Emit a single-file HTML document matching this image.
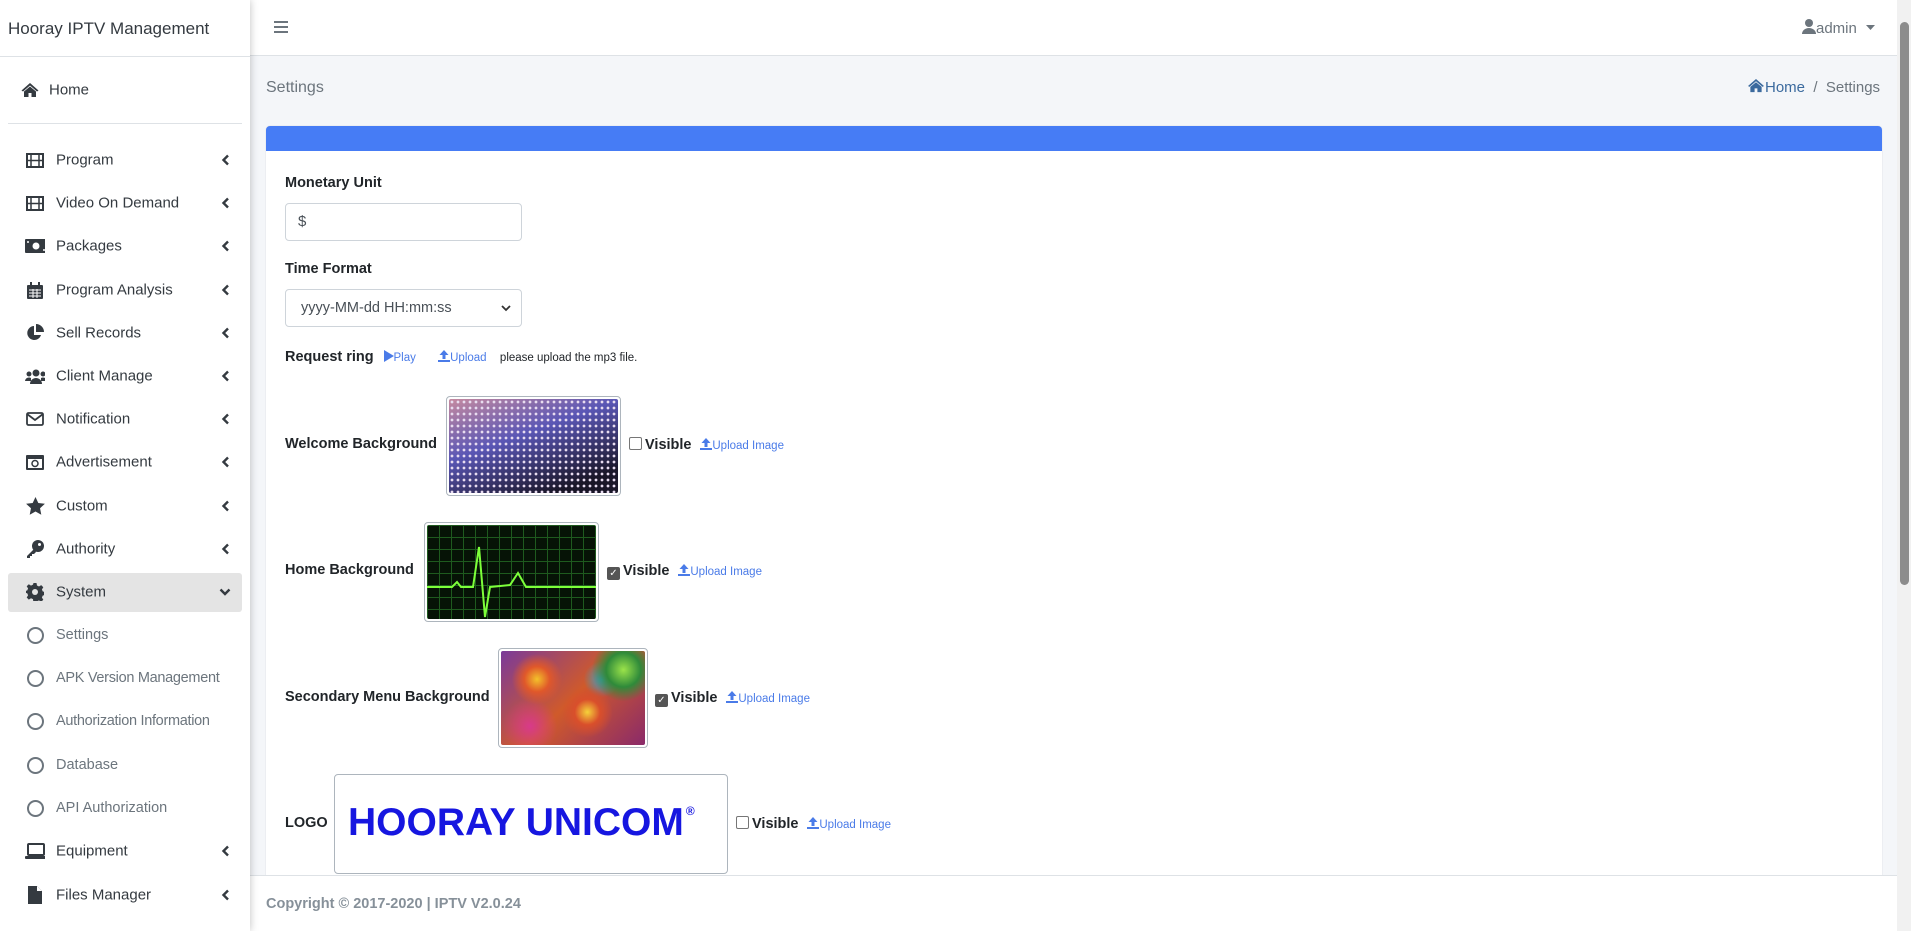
<!DOCTYPE html>
<html><head><meta charset="utf-8"><style>
*{box-sizing:border-box;margin:0;padding:0}
body{width:1911px;height:931px;overflow:hidden;background:#f4f6f9;font-family:"Liberation Sans",sans-serif;color:#212529;position:relative}
.abs{position:absolute}
#sb{left:0;top:0;width:250px;height:931px;background:#fff;box-shadow:0 0 8px rgba(0,0,0,.25);z-index:3}
.brand{left:8px;top:19px;font-size:17px;color:#343a40}
.bline{left:0;top:56px;width:250px;border-top:1px solid #dee2e6}
.mi{left:0;width:250px;height:40px;font-size:15px;color:#343a40}
.mi .t{position:absolute;left:56px;top:50%;transform:translateY(-50%);white-space:nowrap}
.mi .ic{position:absolute;left:25px;top:50%;transform:translateY(-50%);width:20px;height:18px;display:flex;align-items:center;justify-content:center}
.mi .ch{position:absolute;left:221px;top:50%;transform:translateY(-50%);width:9px;height:12px}
.sub{color:#6c757d}
.sub .t{font-size:14.5px}
.circ{width:17px;height:17px;border:2px solid #6c757d;border-radius:50%}
#hdr{left:250px;top:0;width:1647px;height:56px;background:#fff;border-bottom:1px solid #dee2e6}
.lbl{font-weight:bold;font-size:14.5px;color:#212529}
.link{color:#4a7be8;font-size:11.5px}
.img{border:1px solid #adb5bd;border-radius:4px;padding:2px;background:#fff}
.img div{width:100%;height:100%;border-radius:2px}
.cb{display:inline-block;width:13px;height:13px;border:1px solid #767676;border-radius:2px;background:#fff;vertical-align:-1px;margin-right:3px}
.cbon{background:#555;border-color:#555;color:#fff;font-size:10px;line-height:12px;text-align:center}
</style></head><body>
<svg width="0" height="0" style="position:absolute"><defs><symbol id="chv" viewBox="0 0 9 12"><path d="M7 1.5L2.5 6 7 10.5" fill="none" stroke="#343a40" stroke-width="2.4"/></symbol></defs></svg>
<div id="sb" class="abs">
 <div class="abs brand">Hooray IPTV Management</div>
 <div class="abs bline"></div>
 <div class="abs mi" style="top:70px"><span class="ic" style="left:20px"><svg width="18" height="16" viewBox="0 0 18 16"><path d="M9 1L0.5 8.5 2 9.5 9 3.5 16 9.5 17.5 8.5z M3 9.5V15h4.5v-4h3v4H15V9.5L9 4.5z" fill="#343a40"/></svg></span><span class="t" style="left:49px">Home</span></div>
 <div class="abs" style="left:8px;top:123px;width:234px;border-top:1px solid #dee2e6"></div>
 <div class="abs mi" style="top:140px"><span class="ic"><svg width="18" height="15"><rect x="1" y="1" width="16" height="13" fill="none" stroke="#343a40" stroke-width="2"/><path d="M5 1v13M13 1v13M1 7.5h16" stroke="#343a40" stroke-width="1.5"/></svg></span><span class="t">Program</span><svg class="ch"><use href="#chv"/></svg></div>
 <div class="abs mi" style="top:183px"><span class="ic"><svg width="18" height="15"><rect x="1" y="1" width="16" height="13" fill="none" stroke="#343a40" stroke-width="2"/><path d="M5 1v13M13 1v13M1 7.5h16" stroke="#343a40" stroke-width="1.5"/></svg></span><span class="t">Video On Demand</span><svg class="ch"><use href="#chv"/></svg></div>
 <div class="abs mi" style="top:226px"><span class="ic"><svg width="22" height="14"><rect width="22" height="14" rx="1" fill="#343a40"/><circle cx="11" cy="7" r="3.5" fill="#fff"/><circle cx="3" cy="3" r="1" fill="#fff"/><circle cx="19" cy="11" r="1" fill="#fff"/></svg></span><span class="t">Packages</span><svg class="ch"><use href="#chv"/></svg></div>
 <div class="abs mi" style="top:270px"><span class="ic"><svg width="16" height="17"><rect y="3" width="16" height="14" rx="1" fill="#343a40"/><rect x="3" y="0" width="2" height="4" fill="#343a40"/><rect x="11" y="0" width="2" height="4" fill="#343a40"/><path d="M2 8h12M2 11h12M2 14h12M6 7v9M10 7v9" stroke="#fff" stroke-width="1"/></svg></span><span class="t">Program Analysis</span><svg class="ch"><use href="#chv"/></svg></div>
 <div class="abs mi" style="top:313px"><span class="ic"><svg width="18" height="18"><path d="M8 2a7 7 0 1 0 7 9H8z" fill="#343a40"/><path d="M10 0v8h8a8 8 0 0 0-8-8z" fill="#343a40"/></svg></span><span class="t">Sell Records</span><svg class="ch"><use href="#chv"/></svg></div>
 <div class="abs mi" style="top:356px"><span class="ic"><svg width="22" height="15"><circle cx="11" cy="4" r="3.5" fill="#343a40"/><path d="M5 15a6 6 0 0 1 12 0z" fill="#343a40"/><circle cx="4" cy="5" r="2.5" fill="#343a40"/><circle cx="18" cy="5" r="2.5" fill="#343a40"/><path d="M0 12a4 4 0 0 1 6-3v3zM22 12a4 4 0 0 0-6-3v3z" fill="#343a40"/></svg></span><span class="t">Client Manage</span><svg class="ch"><use href="#chv"/></svg></div>
 <div class="abs mi" style="top:399px"><span class="ic"><svg width="18" height="14"><rect x="1" y="1" width="16" height="12" rx="1.5" fill="none" stroke="#343a40" stroke-width="1.8"/><path d="M1 2l8 6 8-6" fill="none" stroke="#343a40" stroke-width="1.8"/></svg></span><span class="t">Notification</span><svg class="ch"><use href="#chv"/></svg></div>
 <div class="abs mi" style="top:442px"><span class="ic"><svg width="18" height="15"><rect width="18" height="15" rx="1" fill="#343a40"/><rect x="2" y="4" width="14" height="9" fill="#fff"/><circle cx="9" cy="8.5" r="3" fill="none" stroke="#343a40" stroke-width="1.5"/></svg></span><span class="t">Advertisement</span><svg class="ch"><use href="#chv"/></svg></div>
 <div class="abs mi" style="top:486px"><span class="ic"><svg width="19" height="18" viewBox="0 0 24 23"><path d="M12 0l3.6 7.6 8.4 1-6.2 5.8 1.6 8.3L12 18.6 4.6 22.7l1.6-8.3L0 8.6l8.4-1z" fill="#343a40"/></svg></span><span class="t">Custom</span><svg class="ch"><use href="#chv"/></svg></div>
 <div class="abs mi" style="top:529px"><span class="ic"><svg width="18" height="18"><circle cx="12" cy="6" r="6" fill="#343a40"/><path d="M8 9L1 16v2h3v-2h2v-2h2l2-2z" fill="#343a40"/><circle cx="13.5" cy="4.5" r="1.5" fill="#fff"/></svg></span><span class="t">Authority</span><svg class="ch"><use href="#chv"/></svg></div>
 <div class="abs" style="left:8px;top:573px;width:234px;height:39px;background:#e4e4e4;border-radius:3px"></div>
 <div class="abs mi" style="top:572px"><span class="ic"><svg width="18" height="18" viewBox="0 0 18 18"><path d="M7.5 0h3l.5 2.5 2 1 2.2-1.4 2.1 2.1L15.9 6.5l.9 2 2.2.5v3l-2.2.5-.9 2 1.4 2.2-2.1 2.1-2.2-1.4-2 .9-.5 2.6h-3L7 16.1l-2-.9-2.2 1.4L.7 14.5 2.1 12.3l-.9-2L-1 9.8V8l2.2-.5.9-2L.7 3.3 2.8 1.2 5 2.6l2-1z" fill="#343a40"/><circle cx="9" cy="9" r="3" fill="#e4e4e4"/></svg></span><span class="t">System</span><svg class="ch" style="width:12px;height:9px;left:219px" viewBox="0 0 12 9"><path d="M1.5 2L6 6.5 10.5 2" fill="none" stroke="#343a40" stroke-width="2.4"/></svg></div>
 <div class="abs mi sub" style="top:615px"><span class="ic"><span class="circ"></span></span><span class="t">Settings</span></div>
 <div class="abs mi sub" style="top:658px"><span class="ic"><span class="circ"></span></span><span class="t" style="letter-spacing:-0.3px">APK Version Management</span></div>
 <div class="abs mi sub" style="top:701px"><span class="ic"><span class="circ"></span></span><span class="t" style="letter-spacing:-0.3px">Authorization Information</span></div>
 <div class="abs mi sub" style="top:745px"><span class="ic"><span class="circ"></span></span><span class="t">Database</span></div>
 <div class="abs mi sub" style="top:788px"><span class="ic"><span class="circ"></span></span><span class="t">API Authorization</span></div>
 <div class="abs mi" style="top:831px"><span class="ic"><svg width="22" height="16"><rect x="3" y="1" width="16" height="11" rx="1" fill="none" stroke="#343a40" stroke-width="2"/><rect x="0" y="13" width="22" height="3" rx="1" fill="#343a40"/></svg></span><span class="t">Equipment</span><svg class="ch"><use href="#chv"/></svg></div>
 <div class="abs mi" style="top:875px"><span class="ic"><svg width="14" height="18"><path d="M0 0h9l5 5v13H0z" fill="#343a40"/><path d="M9 0v5h5" fill="#fff"/></svg></span><span class="t">Files Manager</span><svg class="ch"><use href="#chv"/></svg></div>
</div>

<div id="hdr" class="abs">
 <div class="abs" style="left:24px;top:21px;width:14px"><div style="border-top:2px solid #6c757d;margin-bottom:3px"></div><div style="border-top:2px solid #6c757d;margin-bottom:3px"></div><div style="border-top:2px solid #6c757d"></div></div>
 <div class="abs" style="left:1552px;top:19px;font-size:15px;color:#6c757d;white-space:nowrap"><svg width="14" height="15" style="vertical-align:-1px"><circle cx="7" cy="4" r="4" fill="#6c757d"/><path d="M0 15a7 6 0 0 1 14 0z" fill="#6c757d"/></svg>admin <svg width="9" height="5" style="margin-left:5px;vertical-align:3px"><path d="M0 0h9L4.5 5z" fill="#6c757d"/></svg></div>
</div>
<div class="abs" style="left:1897px;top:0;width:14px;height:931px;background:#f1f1f1"></div>
<div class="abs" style="left:1900px;top:22px;width:9px;height:563px;background:#8c8c8c;border-radius:5px"></div>

<div class="abs" style="left:266px;top:79px;font-size:16px;color:#6c757d">Settings</div>
<div class="abs" style="left:1747px;top:78px;font-size:15px;color:#6c757d;white-space:nowrap"><span style="color:#3b6a9e"><svg width="18" height="15" viewBox="0 0 18 16" style="vertical-align:-1px"><path d="M9 1L0.5 8.5 2 9.5 9 3.5 16 9.5 17.5 8.5z M3 9.5V15h4.5v-4h3v4H15V9.5L9 4.5z" fill="#3b6a9e"/></svg>Home</span>&nbsp; / &nbsp;Settings</div>

<div class="abs" style="left:266px;top:126px;width:1616px;height:760px;background:#fff;border-radius:4px;box-shadow:0 0 1px rgba(0,0,0,.2)">
 <div style="height:25px;background:#467cf5;border-radius:4px 4px 0 0"></div>
</div>
<div class="abs lbl" style="left:285px;top:175px">Monetary Unit</div>
<div class="abs" style="left:285px;top:203px;width:237px;height:38px;border:1px solid #ced4da;border-radius:4px;padding:9px 12px;font-size:15px;color:#495057">$</div>
<div class="abs lbl" style="left:285px;top:261px">Time Format</div>
<div class="abs" style="left:285px;top:289px;width:237px;height:38px;border:1px solid #ced4da;border-radius:4px;padding:10px 15px;font-size:14.5px;color:#495057">yyyy-MM-dd HH:mm:ss<svg width="10" height="7" style="position:absolute;right:10px;top:15px"><path d="M1 1l4 4 4-4" fill="none" stroke="#333" stroke-width="1.8"/></svg></div>
<div class="abs" style="left:285px;top:348px;white-space:nowrap"><span class="lbl">Request ring</span>&nbsp; <span class="link"><svg width="11" height="12" style="vertical-align:-1px"><path d="M1 0l10 6-10 6z" fill="#4a7be8"/></svg>Play</span>&nbsp;&nbsp;&nbsp;&nbsp; <span class="link"><svg width="12" height="12" style="vertical-align:-1px"><path d="M6 0l4.5 5H7.5v4h-3V5H1.5z M0 10h12v2H0z" fill="#4a7be8"/></svg>Upload</span>&nbsp;&nbsp; <span style="font-size:11.5px">please upload the mp3 file.</span></div>

<div class="abs lbl" style="left:285px;top:436px">Welcome Background</div>
<div class="abs img" style="left:446px;top:396px;width:175px;height:100px"><div style="background-color:#201a2e;background-image:radial-gradient(circle,#e8dcf0 1.2px,transparent 1.6px),linear-gradient(160deg,#c58aa0,#5a56b5 40%,#1a1628 85%);background-size:6px 6px,100% 100%"></div></div>
<div class="abs" style="left:629px;top:436px;white-space:nowrap"><span class="cb"></span><span class="lbl">Visible</span>&nbsp; <span class="link"><svg width="12" height="12" style="vertical-align:-1px"><path d="M6 0l4.5 5H7.5v4h-3V5H1.5z M0 10h12v2H0z" fill="#4a7be8"/></svg>Upload Image</span></div>

<div class="abs lbl" style="left:285px;top:562px">Home Background</div>
<div class="abs img" style="left:424px;top:522px;width:175px;height:100px"><div style="background-color:#061306;background-image:linear-gradient(#1e5a1e 1px,transparent 1px),linear-gradient(90deg,#1e5a1e 1px,transparent 1px);background-size:12px 12px;position:relative"><svg width="169" height="94" style="position:absolute;left:0;top:0"><path d="M0 62h25l5-5 4 5h12l6-40 6 70 5-30 20-2 8-12 8 14h70" fill="none" stroke="#7dff3a" stroke-width="2"/></svg></div></div>
<div class="abs" style="left:607px;top:562px;white-space:nowrap"><span class="cb cbon">&#10003;</span><span class="lbl">Visible</span>&nbsp; <span class="link"><svg width="12" height="12" style="vertical-align:-1px"><path d="M6 0l4.5 5H7.5v4h-3V5H1.5z M0 10h12v2H0z" fill="#4a7be8"/></svg>Upload Image</span></div>

<div class="abs lbl" style="left:285px;top:689px">Secondary Menu Background</div>
<div class="abs img" style="left:498px;top:648px;width:150px;height:100px"><div style="background:radial-gradient(circle at 25% 30%,#f3c12a 0,#e0582a 10%,transparent 20%),radial-gradient(circle at 60% 65%,#f5d23a 0,#d94f2b 12%,transparent 24%),radial-gradient(circle at 85% 20%,#9be34a 0,#2f8a3a 12%,transparent 22%),radial-gradient(circle at 70% 30%,#3aa0c8 0,transparent 15%),radial-gradient(circle at 20% 80%,#d83a8a 0,transparent 20%),linear-gradient(135deg,#7a3a9a,#d05a2a 50%,#8a2a6a)"></div></div>
<div class="abs" style="left:655px;top:689px;white-space:nowrap"><span class="cb cbon">&#10003;</span><span class="lbl">Visible</span>&nbsp; <span class="link"><svg width="12" height="12" style="vertical-align:-1px"><path d="M6 0l4.5 5H7.5v4h-3V5H1.5z M0 10h12v2H0z" fill="#4a7be8"/></svg>Upload Image</span></div>

<div class="abs lbl" style="left:285px;top:815px">LOGO</div>
<div class="abs" style="left:334px;top:774px;width:394px;height:100px;border:1px solid #adb5bd;border-radius:4px"></div>
<div class="abs" style="left:348px;top:801px;font-size:39px;font-weight:bold;color:#1616e0;white-space:nowrap;letter-spacing:0px">HOORAY UNICOM<sup style="font-size:12px;vertical-align:20px;margin-left:2px">&reg;</sup></div>
<div class="abs" style="left:736px;top:815px;white-space:nowrap"><span class="cb"></span><span class="lbl">Visible</span>&nbsp; <span class="link"><svg width="12" height="12" style="vertical-align:-1px"><path d="M6 0l4.5 5H7.5v4h-3V5H1.5z M0 10h12v2H0z" fill="#4a7be8"/></svg>Upload Image</span></div>

<div class="abs" style="left:250px;top:875px;width:1647px;height:56px;background:#fff;border-top:1px solid #dee2e6"></div>
<div class="abs" style="left:266px;top:896px;font-size:14.5px;font-weight:bold;color:#869099">Copyright © 2017-2020 | IPTV V2.0.24</div>
</body></html>
